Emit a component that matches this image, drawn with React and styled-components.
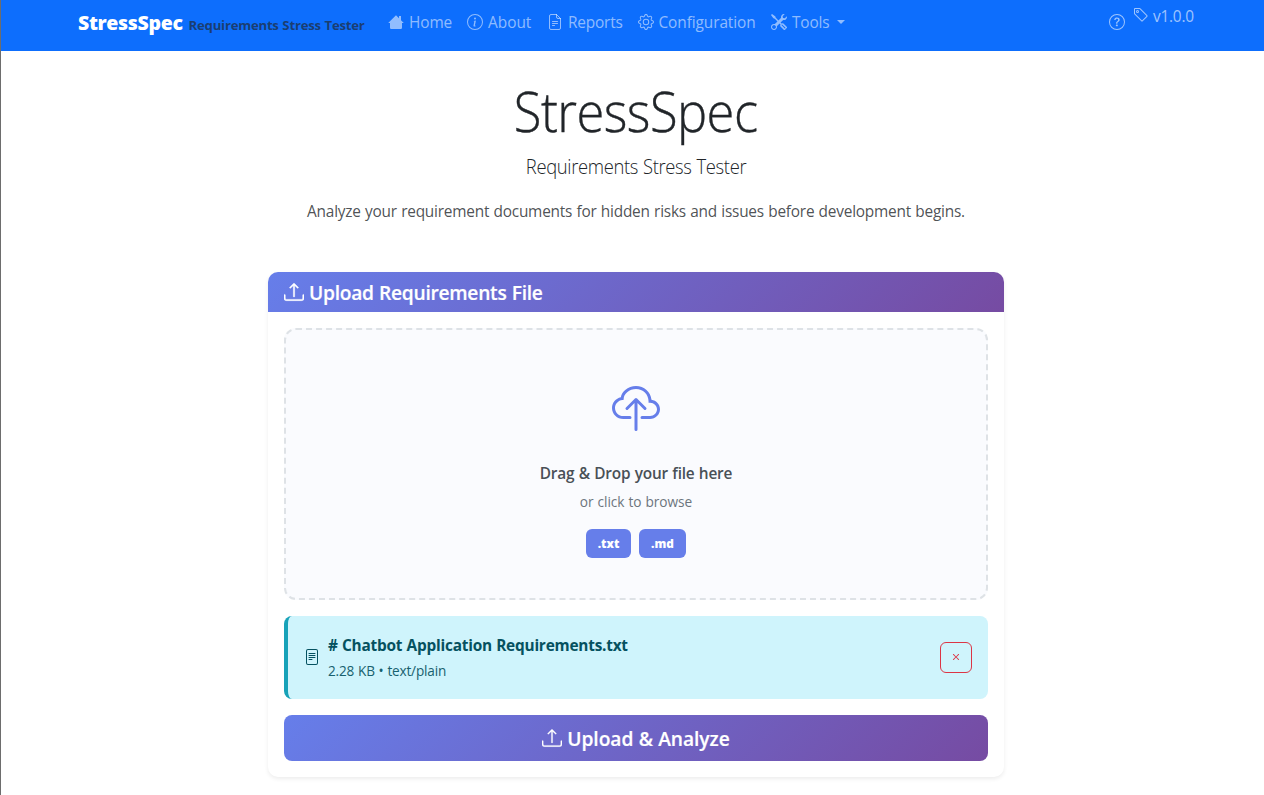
import React from 'react';
import styled, { createGlobalStyle } from 'styled-components';
import {
  BsInfoCircle, BsGear, BsTools, BsQuestionCircle, BsTag, BsUpload, BsCloudUpload, BsFileText, BsX,
} from 'react-icons/bs';

const GlobalStyle = createGlobalStyle`
  *, *::before, *::after { box-sizing: border-box; }
  html, body { margin: 0; overflow: hidden; background: #fff; }
  body { font: 400 15.4px/24px "Open Sans", "Noto Sans", sans-serif; color: #212529; }
  h1, p { margin: 0; }
  svg { display: block; flex: none; }
`;

const Page = styled.div`
  width: 1271px;
  height: 795px;
  overflow: hidden;
  border-left: 1px solid #6d6d6d;
`;

const Label = styled.span`
  display: inline-block;
  white-space: pre;
  word-spacing: 0.5px;
  letter-spacing: ${(p) => p.$track || 0}px;
`;

const Squeezed = styled(Label)`
  transform: scaleX(${(p) => p.$scale});
`;

const Navbar = styled.nav`
  height: 51px;
  background: #0d6efd;
`;

const Container = styled.div`
  width: 1140px;
  height: 100%;
  margin: 0 auto;
  padding: 0 12px;
  display: flex;
  align-items: flex-start;
`;

const Brand = styled.div`
  width: 302px;
  padding-top: 8px;
  display: flex;
  align-items: baseline;
  gap: 6px;
  line-height: 30px;
`;

const BrandName = styled(Label)`
  font-size: 19.5px;
  font-weight: 800;
  color: #fff;
`;

const BrandTag = styled(Label)`
  font-size: 13.2px;
  font-weight: 700;
  color: rgba(33, 37, 41, 0.68);
`;

const NavList = styled.div`
  display: flex;
  flex: 1;
`;

const NavLink = styled.div`
  width: ${(p) => p.$width}px;
  padding: 10px 8px 0;
  display: flex;
  align-items: center;
  gap: 5px;
  color: rgba(255, 255, 255, 0.55);
  white-space: nowrap;
`;

const NavLabel = styled(Label)`
  padding-top: 2px;
  line-height: 22px;
`;

const Caret = styled.i`
  margin-left: 3px;
  border-top: 4.8px solid currentColor;
  border-left: 4.8px solid transparent;
  border-right: 4.8px solid transparent;
`;

const NavEnd = styled.div`
  display: flex;
  align-items: flex-start;
`;

const HelpLink = styled.div`
  width: 32px;
  padding: 14px 8px 0;
  color: rgba(255, 255, 255, 0.6);
`;

const Version = styled.div`
  width: 61px;
  padding-top: 4px;
  display: flex;
  gap: 4px;
  color: rgba(255, 255, 255, 0.6);
  svg { margin-top: 3px; }
`;

const Hero = styled.header`
  padding-top: 26px;
  text-align: center;
`;

const Title = styled.h1`
  font-size: 56px;
  font-weight: 300;
  line-height: 67px;
  -webkit-text-stroke: 0.4px currentColor;
`;

const Subtitle = styled.p`
  margin-top: 8px;
  font-size: 19.4px;
  font-weight: 300;
  line-height: 30px;
`;

const Intro = styled.p`
  margin-top: 18px;
  color: rgba(33, 37, 41, 0.8);
`;

const Card = styled.section`
  width: 736px;
  height: 505px;
  margin: 48px auto 0;
  border-radius: 10px;
  background: #fff;
  box-shadow: 0 2px 4px rgba(0, 0, 0, 0.075);
`;

const CardHeader = styled.div`
  height: 40px;
  padding: 2px 16px 0;
  display: flex;
  align-items: center;
  gap: 5px;
  border-radius: 10px 10px 0 0;
  background: linear-gradient(135deg, #667eea 0%, #764ba2 100%);
  color: #fff;
  font-size: 19.2px;
  font-weight: 600;
  -webkit-text-stroke: 0.2px currentColor;
  svg { margin-top: -3px; stroke: currentColor; stroke-width: 0.4px; }
`;

const CardBody = styled.div`
  padding: 16px;
  display: flex;
  flex-direction: column;
  gap: 16px;
`;

const DropZone = styled.div`
  height: 272px;
  padding-top: 56px;
  border: 2px dashed #dee2e6;
  border-radius: 12px;
  background: #fafbfe;
  display: flex;
  flex-direction: column;
  align-items: center;
`;

const DropTitle = styled.div`
  margin-top: 28px;
  font-weight: 600;
  color: #495057;
`;

const DropHint = styled.div`
  margin-top: 5px;
  font-size: 13.7px;
  line-height: 21px;
  color: #6c757d;
`;

const Badges = styled.div`
  margin-top: 17px;
  display: flex;
  gap: 8px;
`;

const Badge = styled.span`
  width: ${(p) => p.$width}px;
  height: 29px;
  border-radius: 6px;
  background: #667eea;
  color: #fff;
  font-size: 11.8px;
  font-weight: 800;
  line-height: 29px;
  text-align: center;
`;

const FileRow = styled.div`
  height: 83px;
  padding: 0 16px;
  display: flex;
  align-items: center;
  gap: 8px;
  border-left: 4px solid #17a2b8;
  border-radius: 8px;
  background: #cff4fc;
  color: #055160;
  > svg { margin-bottom: 2px; }
`;

const FileInfo = styled.div`
  flex: 1;
`;

const FileName = styled.div`
  font-weight: 700;
  line-height: 24px;
`;

const FileMeta = styled.div`
  margin-top: 2px;
  font-size: 13.6px;
  line-height: 22px;
  opacity: 0.9;
`;

const RemoveButton = styled.button`
  width: 32px;
  height: 31px;
  padding: 0 0 1px;
  display: grid;
  place-items: center;
  border: 1px solid #dc3545;
  border-radius: 6px;
  background: transparent;
  color: #dc3545;
`;

const SubmitButton = styled.button`
  height: 46px;
  padding: 2px 0 0;
  display: flex;
  align-items: center;
  justify-content: center;
  gap: 5px;
  border: 0;
  border-radius: 8px;
  background: linear-gradient(135deg, #667eea 0%, #764ba2 100%);
  color: #fff;
  font: 600 19.2px/30px "Open Sans", "Noto Sans", sans-serif;
  -webkit-text-stroke: 0.2px currentColor;
  svg { margin-top: -3px; stroke: currentColor; stroke-width: 0.2px; }
`;

const HouseIcon = () => (
  <svg width="16" height="16" viewBox="0 0 16 16" fill="currentColor">
    <path d="M8 1.2 11 4.2V2h2v4.2l2.8 2.8H14v4.8a1.2 1.2 0 0 1-1.2 1.2H3.2A1.2 1.2 0 0 1 2 13.8V9H.2z" />
  </svg>
);

const ReportIcon = () => (
  <svg width="16" height="16" viewBox="0 0 16 16" fill="none" stroke="currentColor" strokeLinecap="round" strokeLinejoin="round">
    <path d="M9.5.5H4A1.5 1.5 0 0 0 2.5 2v12A1.5 1.5 0 0 0 4 15.5h8a1.5 1.5 0 0 0 1.5-1.5V4.5L9.5.5V3A1.5 1.5 0 0 0 11 4.5h2.5" />
    <path d="M5.5 7.5h5M5.5 9.5h5M5.5 11.5h2" />
  </svg>
);

const links = [
  { text: 'Home', icon: HouseIcon, width: 79, track: -0.1 },
  { text: 'About', icon: BsInfoCircle, width: 80, track: 0 },
  { text: 'Reports', icon: ReportIcon, width: 90.5, track: -0.18 },
  { text: 'Configuration', icon: BsGear, width: 133.5, track: -0.08 },
  { text: 'Tools', icon: BsTools, width: 92, track: -0.15, menu: true },
];

export default function App() {
  return (
    <>
      <GlobalStyle />
      <Page>
        <Navbar>
          <Container>
            <Brand>
              <BrandName $track={-0.34}>StressSpec</BrandName>
              <BrandTag $track={-0.24}>Requirements Stress Tester</BrandTag>
            </Brand>
            <NavList>
              {links.map(({ text, icon: Icon, width, track, menu }) => (
                <NavLink key={text} $width={width}>
                  <Icon size={16} />
                  <NavLabel $track={track}>{text}</NavLabel>
                  {menu && <Caret />}
                </NavLink>
              ))}
            </NavList>
            <NavEnd>
              <HelpLink><BsQuestionCircle size={16} /></HelpLink>
              <Version>
                <BsTag size={16} />
                <NavLabel $track={-0.22}>v1.0.0</NavLabel>
              </Version>
            </NavEnd>
          </Container>
        </Navbar>
        <Hero>
          <Title><Squeezed $scale={0.905} $track={-0.6}>StressSpec</Squeezed></Title>
          <Subtitle><Squeezed $scale={0.95} $track={-0.36}>Requirements Stress Tester</Squeezed></Subtitle>
          <Intro><Label $track={-0.215}>Analyze your requirement documents for hidden risks and issues before development begins.</Label></Intro>
        </Hero>
        <Card>
          <CardHeader>
            <BsUpload size={20} />
            <Label $track={-0.26}>Upload Requirements File</Label>
          </CardHeader>
          <CardBody>
            <DropZone>
              <BsCloudUpload size={48} color="#667eea" />
              <DropTitle><Label $track={-0.19}>Drag &amp; Drop your file here</Label></DropTitle>
              <DropHint><Label $track={-0.05}>or click to browse</Label></DropHint>
              <Badges>
                <Badge $width={45}>.txt</Badge>
                <Badge $width={47}>.md</Badge>
              </Badges>
            </DropZone>
            <FileRow>
              <BsFileText size={16} />
              <FileInfo>
                <FileName><Label $track={-0.22}># Chatbot Application Requirements.txt</Label></FileName>
                <FileMeta><Label $track={-0.18}>2.28 KB • text/plain</Label></FileMeta>
              </FileInfo>
              <RemoveButton aria-label="Remove file"><BsX size={14} /></RemoveButton>
            </FileRow>
            <SubmitButton>
              <BsUpload size={20} />
              <Label $track={-0.06}>Upload &amp; Analyze</Label>
            </SubmitButton>
          </CardBody>
        </Card>
      </Page>
    </>
  );
}
